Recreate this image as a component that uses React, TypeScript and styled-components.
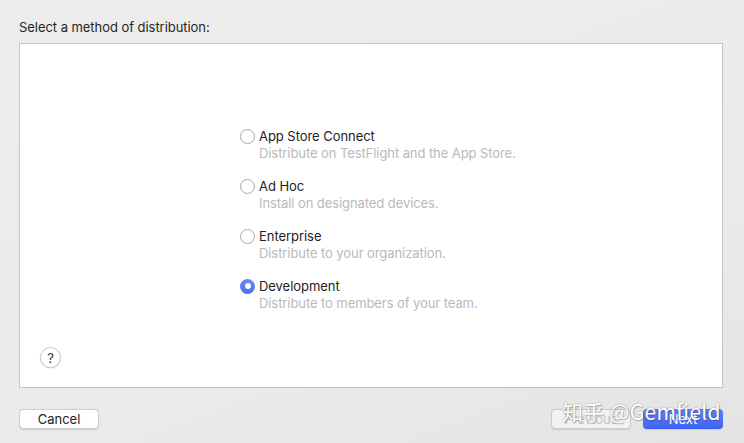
import styled, { createGlobalStyle } from "styled-components"

const Global = createGlobalStyle`
  html, body {
    margin: 0;
    padding: 0;
    background: #ececec;
    font-family: Inter, "Liberation Sans", sans-serif;
    -webkit-font-smoothing: antialiased;
  }
`

const Page = styled.div`
  position: relative;
  width: 744px;
  height: 443px;
  box-sizing: border-box;
  padding: 19px 21px 0 19px;
  display: flex;
  flex-direction: column;
  background: linear-gradient(160deg, #ededed 0%, #ebebeb 60%, #e4e4e4 100%);
  overflow: hidden;
`

const Title = styled.div`
  font-size: 13px;
  line-height: 16px;
  color: #262626;
  height: 24px;
  letter-spacing: -0.05px;
`

const Panel = styled.div`
  height: 345px;
  box-sizing: border-box;
  background: #fff;
  border: 1px solid #c4c4c4;
  display: flex;
  flex-direction: column;
  padding: 84px 20px 19px 20px;
`

const Options = styled.div`
  display: flex;
  flex-direction: column;
  gap: 17px;
  padding-left: 200px;
  flex: 1;
`

const Option = styled.label`
  display: grid;
  grid-template-columns: 19px auto;
  grid-template-rows: 16px 16px;
  row-gap: 1px;
  align-items: center;
`

const Radio = styled.span<{ $on?: boolean }>`
  width: 15px;
  height: 15px;
  box-sizing: border-box;
  border-radius: 50%;
  border: ${p => (p.$on ? "none" : "1px solid #a9a9a9")};
  background: ${p => (p.$on ? "linear-gradient(#6c89f6, #4d6ef0)" : "#fff")};
  display: flex;
  align-items: center;
  justify-content: center;
  &::after {
    content: "";
    display: ${p => (p.$on ? "block" : "none")};
    width: 6px;
    height: 6px;
    border-radius: 50%;
    background: #fff;
  }
`

const Name = styled.span`
  font-size: 13px;
  color: #222;
  letter-spacing: -0.05px;
`

const Desc = styled.span`
  grid-column: 2;
  font-size: 13px;
  color: #b9b9b9;
  letter-spacing: -0.08px;
`

const Help = styled.button`
  width: 21px;
  height: 21px;
  border-radius: 50%;
  border: 1px solid #c9c9c9;
  background: #fff;
  box-shadow: 0 0.5px 1px rgba(0, 0, 0, 0.15);
  font-family: inherit;
  font-size: 13px;
  color: #333;
  padding: 0;
  display: flex;
  align-items: center;
  justify-content: center;
`

const Footer = styled.div`
  display: flex;
  align-items: center;
  margin-top: 21px;
  gap: 12px;
`

const Spacer = styled.div`
  flex: 1;
`

const Button = styled.button<{ $kind?: "primary" | "disabled" }>`
  width: 80px;
  height: 20px;
  box-sizing: border-box;
  border-radius: 4px;
  font-family: inherit;
  font-size: 13px;
  padding: 0;
  border: ${p => (p.$kind === "primary" ? "none" : "1px solid #cdcdcd")};
  background: ${p =>
    p.$kind === "primary"
      ? "linear-gradient(#6583f7, #3f62f0)"
      : p.$kind === "disabled"
      ? "#f2f2f2"
      : "#fff"};
  color: ${p =>
    p.$kind === "primary" ? "#fff" : p.$kind === "disabled" ? "#c4c4c4" : "#222"};
  box-shadow: 0 0.5px 1px rgba(0, 0, 0, 0.12);
`

const Watermark = styled.div`
  position: absolute;
  left: 562px;
  top: 396px;
  font-family: "Noto Sans CJK SC", "Noto Sans", sans-serif;
  font-size: 21px;
  color: #fff;
  letter-spacing: 0.3px;
  text-shadow: 0 0 2px rgba(0, 0, 0, 0.35), 1px 1px 1px rgba(0, 0, 0, 0.2);
  pointer-events: none;
`

const options = [
  { name: "App Store Connect", desc: "Distribute on TestFlight and the App Store." },
  { name: "Ad Hoc", desc: "Install on designated devices." },
  { name: "Enterprise", desc: "Distribute to your organization." },
  { name: "Development", desc: "Distribute to members of your team.", on: true },
]

export default function App() {
  return (
    <>
      <Global />
      <Page>
        <Title>Select a method of distribution:</Title>
        <Panel>
          <Options>
            {options.map(o => (
              <Option key={o.name}>
                <Radio $on={o.on} />
                <Name>{o.name}</Name>
                <Desc>{o.desc}</Desc>
              </Option>
            ))}
          </Options>
          <Help>?</Help>
        </Panel>
        <Footer>
          <Button>Cancel</Button>
          <Spacer />
          <Button $kind="disabled">Previous</Button>
          <Button $kind="primary">Next</Button>
        </Footer>
        <Watermark>知乎 @Gemfield</Watermark>
      </Page>
    </>
  )
}
